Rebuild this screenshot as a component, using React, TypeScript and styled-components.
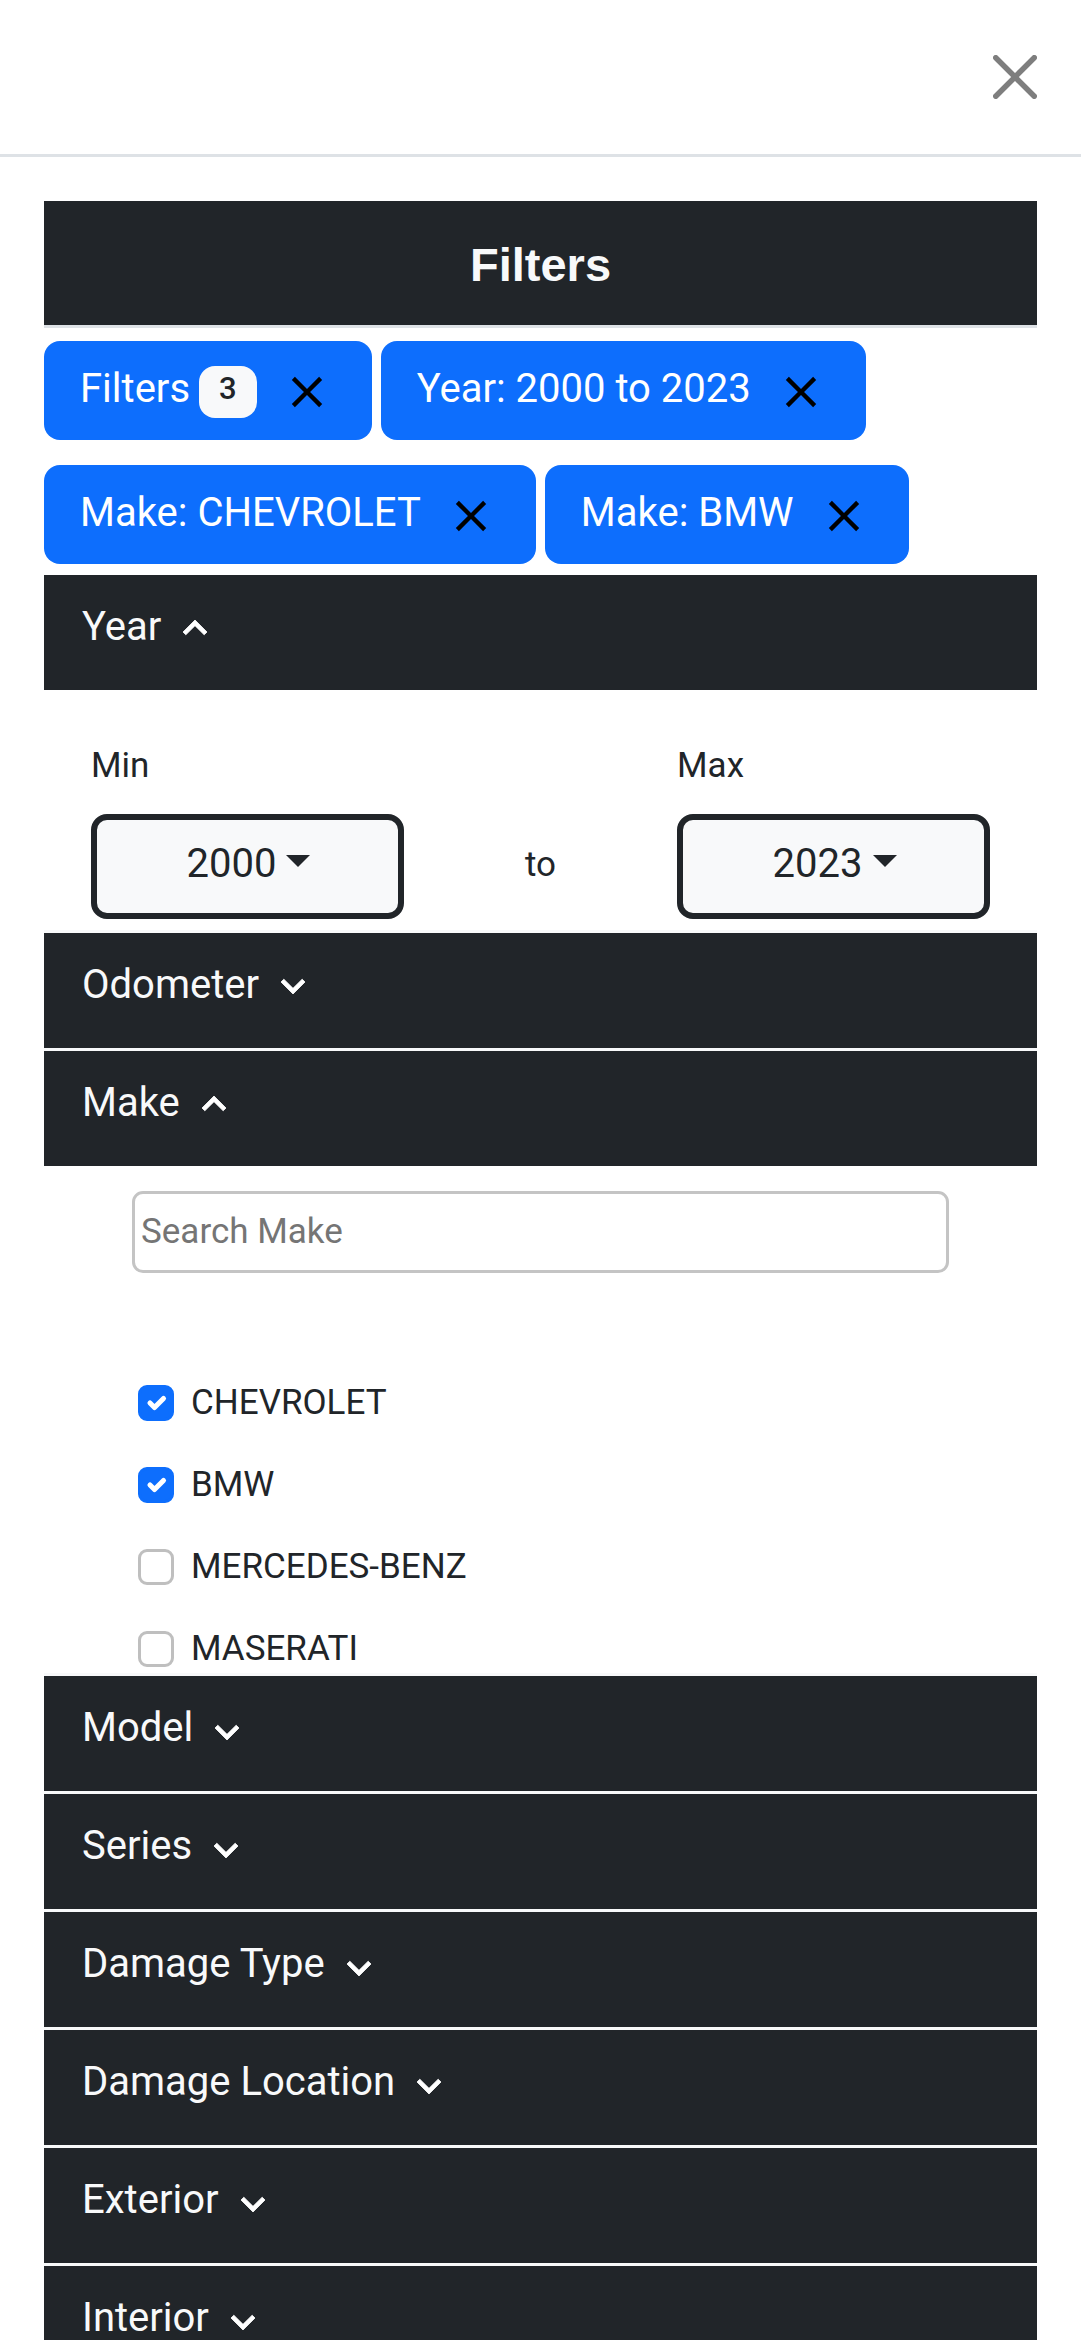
import React, { useState } from "react";
import styled, { createGlobalStyle } from "styled-components";

const GlobalStyle = createGlobalStyle`
  *, *::before, *::after { box-sizing: border-box; }
  body { margin: 0; background: #fff; }
  button, input, select { font: inherit; color: inherit; }
`;

const ink = "#212529";
const paper = "#f8f9fa";
const blue = "#0d6efd";

const Drawer = styled.div`
  display: flex;
  flex-direction: column;
  height: 100vh;
  background: #fff;
  color: ${ink};
  font-family: Roboto, "Noto Sans", sans-serif;
  font-size: 35px;
  line-height: 52px;
`;

const DrawerHeader = styled.header`
  display: flex;
  justify-content: flex-end;
  flex: none;
  padding: 55px 44px;
  border-bottom: 3px solid #dee2e6;
`;

const PlainButton = styled.button`
  display: block;
  flex: none;
  padding: 0;
  border: 0;
  background: none;
  cursor: pointer;

  svg { display: block; }
`;

const CloseButton = styled(PlainButton)`
  opacity: 0.5;
`;

const DrawerBody = styled.main`
  flex: 1;
  min-height: 0;
  padding: 44px 44px 0;
  overflow-y: auto;
  scrollbar-width: none;
`;

const Title = styled.h1`
  margin: 0;
  padding: 36px 22px 32px;
  border-bottom: 3px solid #dee2e6;
  background: ${ink};
  background-clip: padding-box;
  color: ${paper};
  font: bold 47px/56px "Liberation Sans", Arial, sans-serif;
  text-align: center;
`;

const Chips = styled.div`
  display: flex;
  flex-wrap: wrap;
  gap: 25px 9px;
  padding: 13px 0 11px;
`;

const Chip = styled.div`
  display: flex;
  align-items: center;
  padding: 24px 39px 22px 36px;
  border-radius: 16px;
  background: ${blue};
  color: #fff;
  font-size: 40px;
`;

const ChipLabel = styled.span`
  padding-bottom: 5px;
  line-height: 48px;
`;

const Badge = styled.span`
  margin-left: 9px;
  padding: 0 20px 6px;
  border-radius: 16px;
  background: ${paper};
  color: ${ink};
  font-size: 31px;
  font-weight: 500;
  line-height: 46px;
`;

const ChipClose = styled(PlainButton)`
  margin-left: 24px;
  color: #000;
`;

const Section = styled.section`
  border-bottom: 3px solid ${paper};
`;

const SectionHeading = styled.h2`
  margin: 0;
  font-size: 40px;
  font-weight: 400;
  line-height: 48px;
`;

const SectionToggle = styled.button<{ $raised: boolean }>`
  display: flex;
  align-items: center;
  gap: 10px;
  width: 100%;
  padding: 28px 38px 39px;
  border: 0;
  background: ${ink};
  color: ${paper};
  text-align: left;
  cursor: pointer;

  svg {
    display: block;
    flex: none;
    margin: ${({ $raised }) => ($raised ? "1px 0 -1px" : "4px 0 -4px")};
  }
`;

const YearRange = styled.div`
  display: grid;
  grid-template-columns: 1fr auto 1fr;
  align-items: end;
  padding: 50px 47px 11px;
  column-gap: 121px;
`;

const Field = styled.div`
  display: flex;
  flex-direction: column;
  gap: 22px;
`;

const SelectBox = styled.div`
  display: grid;
  align-items: center;

  & > * { grid-area: 1 / 1; }
`;

const YearSelect = styled.select`
  width: 100%;
  padding: 22px 32px 27px 0;
  border: 6px solid ${ink};
  border-radius: 16px;
  appearance: none;
  background: ${paper};
  font-size: 40px;
  line-height: 44px;
  text-align: center;
`;

const Caret = styled.span`
  justify-self: center;
  margin-left: 102px;
  margin-bottom: 12px;
  border: 12px solid transparent;
  border-top-color: ${ink};
  border-bottom: 0;
  pointer-events: none;
`;

const To = styled.span`
  padding-bottom: 28px;
`;

const MakePanel = styled.div`
  padding: 25px 88px 0;
`;

const Search = styled.input`
  display: block;
  width: 100%;
  padding: 13px 6px;
  border: 3px solid #c4c4c4;
  border-radius: 11px;
  background: #fff;
  line-height: 50px;

  &::placeholder { color: #757575; opacity: 1; }
`;

const Options = styled.ul`
  display: flex;
  flex-direction: column;
  gap: 30px;
  margin: 104px 0 -2px;
  padding: 0 6px;
  list-style: none;
`;

const OptionLabel = styled.label`
  display: flex;
  align-items: center;
  gap: 17px;
`;

const TickBox = styled.span`
  display: grid;
  place-items: center;

  & > * { grid-area: 1 / 1; }
  svg { pointer-events: none; }
`;

const Tick = styled.input`
  width: 36px;
  height: 36px;
  margin: 0;
  border: 3px solid #bfbfbf;
  border-radius: 9px;
  appearance: none;
  background: #fff;

  &:checked { border-color: ${blue}; background: ${blue}; }
`;

const Clear = () => (
  <svg width="52" height="52" viewBox="0 0 24 24" fill="currentColor" aria-hidden="true">
    <path d="M19 6.41 17.59 5 12 10.59 6.41 5 5 6.41 10.59 12 5 17.59 6.41 19 12 13.41 17.59 19 19 17.59 13.41 12z" />
  </svg>
);

const Chevron = ({ up }: { up: boolean }) => (
  <svg width="48" height="48" viewBox="0 0 24 24" fill="#fff" stroke="#fff" strokeWidth="0.4" strokeLinejoin="round" aria-hidden="true">
    <path d={up ? "M12 8l-6 6 1.41 1.41L12 10.83l4.59 4.58L18 14z" : "M16.59 8.59 12 13.17 7.41 8.59 6 10l6 6 6-6z"} />
  </svg>
);

const Accordion = ({ title, initiallyOpen = false, raised = false, children }: {
  title: string;
  initiallyOpen?: boolean;
  raised?: boolean;
  children?: React.ReactNode;
}) => {
  const [open, setOpen] = useState(initiallyOpen);
  return (
    <Section>
      <SectionHeading>
        <SectionToggle type="button" $raised={raised} aria-expanded={open} onClick={() => setOpen(!open)}>
          {title}
          <Chevron up={open} />
        </SectionToggle>
      </SectionHeading>
      {open && children}
    </Section>
  );
};

const YearField = ({ id, label, value }: { id: string; label: string; value: number }) => (
  <Field>
    <label htmlFor={id}>{label}</label>
    <SelectBox>
      <YearSelect id={id} defaultValue={value}>
        <option>{value}</option>
      </YearSelect>
      <Caret />
    </SelectBox>
  </Field>
);

const FilterChip = ({ label, count }: { label: string; count?: number }) => (
  <Chip>
    <ChipLabel>{label}</ChipLabel>
    {count !== undefined && <Badge>{count}</Badge>}
    <ChipClose type="button" aria-label={`Clear ${label}`}>
      <Clear />
    </ChipClose>
  </Chip>
);

const makes = [
  { name: "CHEVROLET", picked: true },
  { name: "BMW", picked: true },
  { name: "MERCEDES-BENZ", picked: false },
  { name: "MASERATI", picked: false },
];

export default function App() {
  return (
    <>
      <GlobalStyle />
      <Drawer>
        <DrawerHeader>
          <CloseButton type="button" aria-label="Close">
            <svg width="44" height="44" viewBox="0 0 16 16" aria-hidden="true">
              <path d="M.293.293a1 1 0 0 1 1.414 0L8 6.586 14.293.293a1 1 0 1 1 1.414 1.414L9.414 8l6.293 6.293a1 1 0 0 1-1.414 1.414L8 9.414l-6.293 6.293a1 1 0 0 1-1.414-1.414L6.586 8 .293 1.707a1 1 0 0 1 0-1.414z" />
            </svg>
          </CloseButton>
        </DrawerHeader>
        <DrawerBody>
          <Title>Filters</Title>
          <Chips>
            <FilterChip label="Filters" count={3} />
            <FilterChip label="Year: 2000 to 2023" />
            <FilterChip label="Make: CHEVROLET" />
            <FilterChip label="Make: BMW" />
          </Chips>
          <Accordion title="Year" initiallyOpen raised>
            <YearRange>
              <YearField id="year-min" label="Min" value={2000} />
              <To>to</To>
              <YearField id="year-max" label="Max" value={2023} />
            </YearRange>
          </Accordion>
          <Accordion title="Odometer" raised />
          <Accordion title="Make" initiallyOpen raised>
            <MakePanel>
              <Search type="search" aria-label="Search Make" placeholder="Search Make" />
              <Options>
                {makes.map(({ name, picked }) => (
                  <li key={name}>
                    <OptionLabel>
                      <TickBox>
                        <Tick type="checkbox" defaultChecked={picked} />
                        <svg width="30" height="30" viewBox="0 0 20 20" fill="none" stroke="#fff" strokeWidth="3.4" strokeLinecap="round" strokeLinejoin="round" aria-hidden="true">
                          <path d="m6 10 3 3 6-6" />
                        </svg>
                      </TickBox>
                      {name}
                    </OptionLabel>
                  </li>
                ))}
              </Options>
            </MakePanel>
          </Accordion>
          <Accordion title="Model" />
          <Accordion title="Series" />
          <Accordion title="Damage Type" />
          <Accordion title="Damage Location" />
          <Accordion title="Exterior" />
          <Accordion title="Interior" />
        </DrawerBody>
      </Drawer>
    </>
  );
}
